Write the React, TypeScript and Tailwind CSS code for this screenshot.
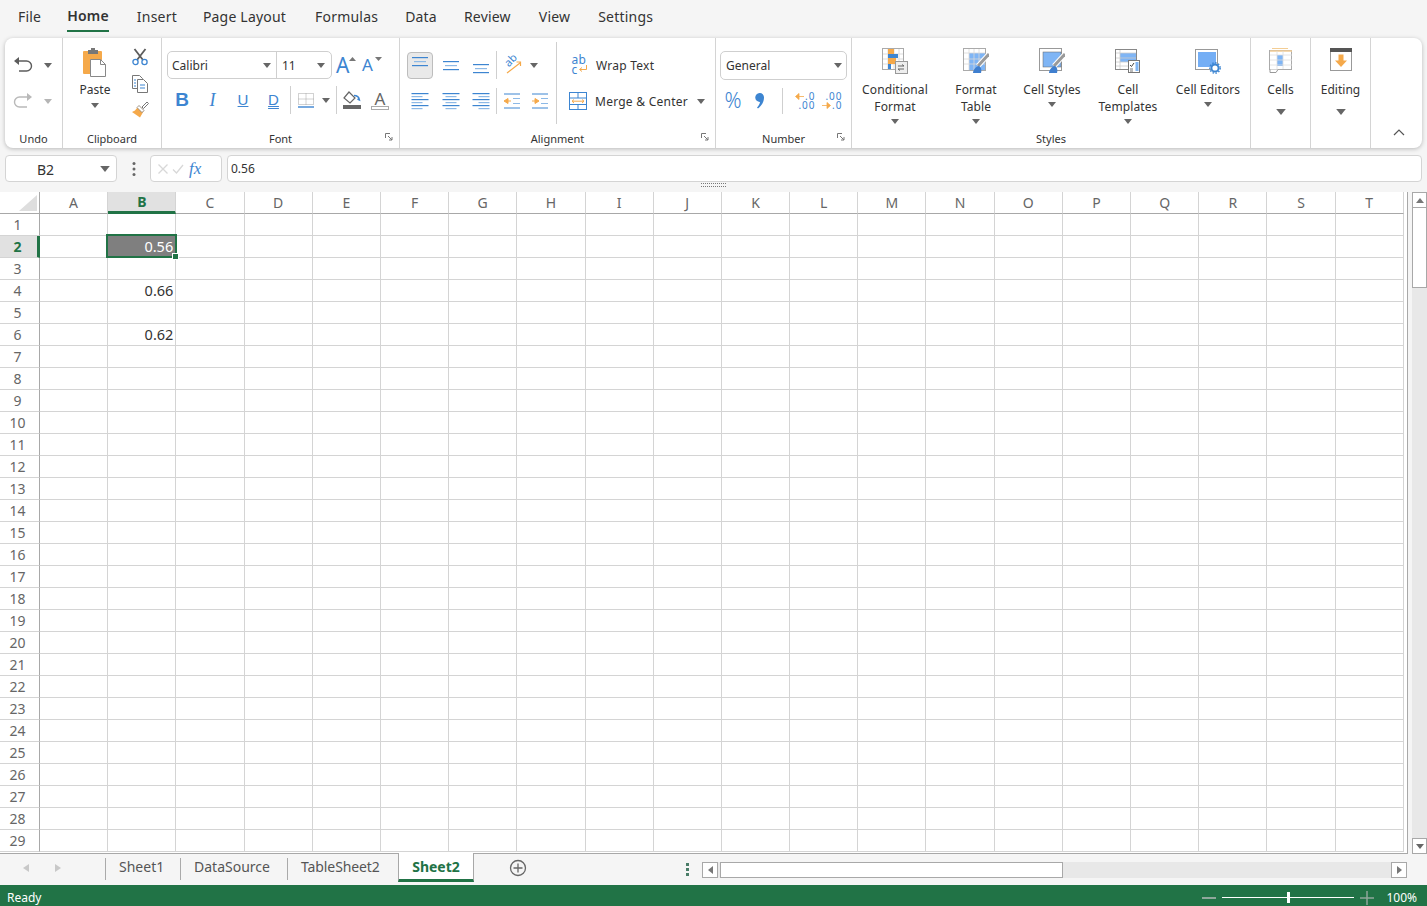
import React from 'react';

const BLUE = '#3d85d1';
const ORANGE = '#f5a94a';

const columns = ['A', 'B', 'C', 'D', 'E', 'F', 'G', 'H', 'I', 'J', 'K', 'L', 'M', 'N', 'O', 'P', 'Q', 'R', 'S', 'T'];
const rows = Array.from({ length: 29 }, (_, i) => i + 1);
const values: Record<string, string> = { B4: '0.66', B6: '0.62' };

function Caret({ light, big }: { light?: boolean; big?: boolean }) {
  return (
    <svg width={big ? 10 : 8} height={big ? 6 : 5} viewBox="0 0 8 5">
      <path d="M0 0h8L4 5z" fill={light ? '#b5b5b5' : '#666'} />
    </svg>
  );
}

function Slot({ className, children }: { className: string; children?: React.ReactNode }) {
  return <div className={`flex items-center justify-center shrink-0 ${className}`}>{children}</div>;
}

function Launcher() {
  return (
    <svg className="absolute right-[6px] bottom-[7px]" width="8" height="8" viewBox="0 0 8 8" fill="none">
      <path d="M.5 5V.5H5M3 3l4 4M7 4v3H4" stroke="#777" strokeWidth="1" />
    </svg>
  );
}

function Group({
  label,
  launcher,
  className,
  children,
}: {
  label?: string;
  launcher?: boolean;
  className: string;
  children: React.ReactNode;
}) {
  return (
    <div className={`relative flex flex-col shrink-0 border-r border-[#d4d4d4] ${className}`}>
      <div className="h-[92px]">{children}</div>
      <div className="h-[18px] text-center text-[11px] leading-[18px] text-[#333]">{label}</div>
      {launcher && <Launcher />}
    </div>
  );
}

function UndoIcon({ redo }: { redo?: boolean }) {
  const c = redo ? '#b9b9b9' : '#5c5c5c';
  return (
    <svg width="20" height="20" viewBox="0 0 20 20" fill="none" className={redo ? '-scale-x-100' : ''}>
      <path d="M5 6h8.5a4.5 4.5 0 0 1 0 10H6" stroke={c} strokeWidth="1.4" />
      <path d="M1 6l5-4v8z" fill={c} />
    </svg>
  );
}

function PasteIcon() {
  return (
    <svg width="26" height="30" viewBox="0 0 26 30">
      <rect x="1" y="4" width="19" height="23" rx="1" fill={ORANGE} />
      <rect x="6" y="3" width="10" height="4" fill="#777" />
      <rect x="9" y="1" width="4" height="3" fill="#777" />
      <path d="M8.500 12.500h10l5 5v12h-15z" fill="#fff" stroke="#888" />
      <path d="M18.500 12.500v5h5" fill="none" stroke="#888" />
    </svg>
  );
}

function CutIcon() {
  return (
    <svg width="18" height="18" viewBox="0 0 18 18" fill="none">
      <path d="M3.500 1l8.500 11M14.500 1L6 12" stroke="#5c5c5c" strokeWidth="1.800" />
      <circle cx="4.500" cy="14" r="2.600" stroke={BLUE} strokeWidth="1.300" />
      <circle cx="13.500" cy="14" r="2.600" stroke={BLUE} strokeWidth="1.300" />
    </svg>
  );
}

function CopyIcon() {
  return (
    <svg width="18" height="20" viewBox="0 0 18 20" fill="none">
      <path d="M1.500 1.500h7l3 3v10h-10z" fill="#fff" stroke="#777" />
      <path d="M6.500 5.500h6l4 4v9h-10z" fill="#fff" stroke="#777" />
      <path d="M3 6h2M3 9h2M3 12h2M9 11h5M9 14h5" stroke={BLUE} />
    </svg>
  );
}

function PainterIcon() {
  return (
    <svg width="18" height="18" viewBox="0 0 18 18" fill="none">
      <path d="M11 6l5-5 1.500 1.500-5 5z" fill="#fff" stroke="#777" />
      <path d="M8 4.500l5 5-4 7-8-5.500 3-1.500z" fill={ORANGE} />
      <path d="M8 4.500l5 5-2 2-5-5z" fill="#fff" stroke="#777" strokeWidth=".7" />
    </svg>
  );
}

function GrowA({ shrink }: { shrink?: boolean }) {
  return (
    <div className="relative flex h-[22px] w-[22px] items-center justify-start text-[#3d85d1]">
      <span className={shrink ? 'ml-[2px] text-[17px] leading-[22px]' : 'ml-[2px] text-[21px] leading-[22px]'}>A</span>
      <svg className="absolute top-[3px] right-0" width="7" height="5" viewBox="0 0 7 5">
        <path d={shrink ? 'M0 0h7L3.500 4z' : 'M0 4h7L3.500 0z'} fill="#777" />
      </svg>
    </div>
  );
}

function BorderIcon() {
  return (
    <svg width="18" height="18" viewBox="0 0 18 18" fill="none">
      <path d="M1.500 2.500h15v11h-15zM1.500 8h15M9 2.500v11" stroke="#a5a5a5" strokeDasharray="1 1" />
      <path d="M1 16h16" stroke={BLUE} strokeWidth="1.400" />
    </svg>
  );
}

function FillIcon() {
  return (
    <svg width="20" height="20" viewBox="0 0 20 20" fill="none">
      <path d="M7 2l6 6-5 5-6-5z" stroke="#666" strokeWidth="1.200" fill="#fff" />
      <path d="M12 5.500c3 0 5 1.500 5.500 4.500l-2-1" stroke={BLUE} strokeWidth="1.400" />
      <rect x="1" y="15" width="18" height="4" fill="#666" />
    </svg>
  );
}

function FontColorIcon() {
  return (
    <div className="flex w-[18px] flex-col items-center">
      <span className="text-[17px] leading-[15px] text-[#666]">A</span>
      <div className="h-[4px] w-[18px] border border-[#aaa] bg-white" />
    </div>
  );
}

function VAlignIcon({ offset }: { offset: number }) {
  return (
    <svg width="18" height="18" viewBox="0 0 18 18">
      <rect x="1" y={offset} width="16" height="1.200" fill={BLUE} />
      <rect x="3" y={offset + 4} width="12" height="1.200" fill="#8db9e6" />
      <rect x="1" y={offset + 8} width="16" height="1.200" fill={BLUE} />
    </svg>
  );
}

function HAlignIcon({ mode }: { mode: 'l' | 'c' | 'r' }) {
  const ys = [2, 5, 8, 11, 14, 17];
  return (
    <svg width="18" height="18" viewBox="0 0 18 18">
      {ys.map((y, i) => {
        const w = i % 2 === 0 ? 17 : 11;
        const x = mode === 'l' ? 0.5 : mode === 'c' ? (18 - w) / 2 : 17.5 - w;
        return <rect key={y} x={x} y={y - 1} width={w} height="1.200" fill={i % 2 === 0 ? BLUE : '#8db9e6'} />;
      })}
    </svg>
  );
}

function IndentIcon({ increase }: { increase?: boolean }) {
  return (
    <svg width="18" height="18" viewBox="0 0 18 18" fill="none">
      <path d="M1 2h16M1 16h16" stroke={BLUE} />
      <path d="M10 6.500h7M10 11.500h7" stroke="#8db9e6" />
      {increase ? (
        <path d="M1 9h5M4 6.500L8 9l-4 2.500z" stroke={ORANGE} fill={ORANGE} />
      ) : (
        <path d="M8 9H3M5 6.500L1 9l4 2.500z" stroke={ORANGE} fill={ORANGE} />
      )}
    </svg>
  );
}

function OrientationIcon() {
  return (
    <div className="relative h-[18px] w-[18px]">
      <span className="absolute top-[-3px] left-0 -rotate-45 text-[11px] leading-[14px] text-[#3d85d1]">ab</span>
      <svg className="absolute top-0 left-0" width="18" height="18" viewBox="0 0 18 18" fill="none">
        <path d="M3 17L16 7M12.500 6h4v4" stroke={ORANGE} strokeWidth="1.200" />
      </svg>
    </div>
  );
}

function WrapIcon() {
  return (
    <div className="relative h-[20px] w-[16px] text-[12px] leading-[10px] text-[#3d85d1]">
      <div>ab</div>
      <div>c</div>
      <svg className="absolute top-[10px] left-[6px]" width="10" height="9" viewBox="0 0 10 9" fill="none">
        <path d="M8.500 0v4.500H2M4 2.500l-2.500 2 2.500 2" stroke={ORANGE} />
      </svg>
    </div>
  );
}

function MergeIcon() {
  return (
    <svg width="18" height="18" viewBox="0 0 18 18" fill="none">
      <rect x=".5" y=".5" width="17" height="17" stroke={BLUE} />
      <path d="M.5 6h17M.5 12.500h17M9 .5V6M9 12.500V18" stroke={BLUE} />
      <path d="M3 9.200h12M5 7.500L3 9.200 5 11M13 7.500l2 1.700-2 1.800" stroke={ORANGE} />
    </svg>
  );
}

function DecimalIcon({ decrease }: { decrease?: boolean }) {
  return (
    <div className="flex w-[19px] flex-col items-end text-[10px] leading-[9px] tracking-[1px] text-[#3d85d1]">
      {decrease ? (
        <>
          <div>.00</div>
          <div className="flex items-center">
            <svg className="mr-[1px]" width="9" height="7" viewBox="0 0 9 7">
              <path d="M0 3.500h6M5 .5l3.500 3L5 6.500z" stroke={ORANGE} fill={ORANGE} strokeWidth=".8" />
            </svg>
            .0
          </div>
        </>
      ) : (
        <>
          <div className="flex items-center">
            <svg className="mr-[1px]" width="9" height="7" viewBox="0 0 9 7">
              <path d="M9 3.500H3M4 .5L.5 3.500 4 6.500z" stroke={ORANGE} fill={ORANGE} strokeWidth=".8" />
            </svg>
            .0
          </div>
          <div>.00</div>
        </>
      )}
    </div>
  );
}

function Brush() {
  return (
    <g>
      <path d="M15 18L26 6" stroke="#fff" strokeWidth="5" />
      <path d="M15 18L26 6" stroke="#9a9a9a" strokeWidth="3" />
      <path d="M10 25c0-3 3-7 6-7 2 1 3 4 2 7z" fill="#3f7fcf" />
    </g>
  );
}

function ConditionalIcon() {
  return (
    <svg width="26" height="26" viewBox="0 0 26 26" fill="none">
      <rect x=".5" y=".5" width="21" height="21" fill="#fff" stroke="#aaa" />
      <path d="M6 1v20M12 1v20M17 1v20M1 6h20M1 11h20M1 16h20" stroke="#ddd" />
      <rect x="6" y="1" width="6" height="5" fill={ORANGE} />
      <rect x="6" y="6" width="10" height="4" fill={BLUE} />
      <rect x="6" y="10" width="8" height="6" fill={ORANGE} />
      <rect x="6" y="16" width="3" height="5" fill={BLUE} />
      <rect x="13.500" y="13.500" width="12" height="12" fill="#eee" stroke="#999" />
      <path d="M16 18h6M20 16.500l2 1.500M22 21h-6M18 22.500L16 21" stroke="#666" />
    </svg>
  );
}

function FormatTableIcon() {
  return (
    <svg width="26" height="26" viewBox="0 0 26 26" fill="none">
      <rect x=".5" y=".5" width="22" height="22" fill="#fff" stroke="#aaa" />
      <rect x="6" y="5" width="16" height="17" fill="#7fb5f5" />
      <path d="M6 1v21M11 1v21M16 1v21M1 5h21M1 11h21M1 16h21" stroke="#d8d8d8" strokeWidth=".8" />
      <Brush />
    </svg>
  );
}

function CellStylesIcon() {
  return (
    <svg width="26" height="26" viewBox="0 0 26 26" fill="none">
      <rect x=".5" y=".5" width="22" height="22" fill="#fff" stroke="#999" />
      <rect x="4" y="4" width="18" height="15" fill="#7fb5f5" stroke="#666" strokeWidth=".5" />
      <Brush />
    </svg>
  );
}

function CellTemplatesIcon() {
  return (
    <svg width="26" height="26" viewBox="0 0 26 26" fill="none">
      <rect x=".5" y="1.500" width="21" height="20" fill="#fff" stroke="#888" />
      <rect x="5" y="5" width="16" height="9" fill="#7fb5f5" />
      <path d="M5 2v19M1 5h20M1 10h20M1 14h13M1 18h13" stroke="#ccc" strokeWidth=".8" />
      <rect x="13.500" y="12.500" width="11" height="12" fill="#fff" stroke="#777" />
      <path d="M15 17l1.500 1.500L19 15" stroke="#444" />
      <path d="M15 21h3M15 23h3" stroke="#777" />
      <rect x="20.500" y="14" width="3" height="9" fill="#7fb5f5" />
    </svg>
  );
}

function CellEditorsIcon() {
  return (
    <svg width="26" height="26" viewBox="0 0 26 26" fill="none">
      <rect x=".5" y="1.500" width="22" height="20" fill="#fff" stroke="#999" />
      <rect x="3" y="4" width="18" height="15" fill="#74aef5" />
      <circle cx="20" cy="20" r="3.600" fill="#fff" stroke={BLUE} strokeWidth="2" />
      <circle cx="20" cy="20" r="5.200" stroke={BLUE} strokeWidth="1.400" strokeDasharray="1.500 1.500" />
    </svg>
  );
}

function CellsIcon() {
  return (
    <svg width="24" height="25" viewBox="0 0 24 25" fill="none">
      <path d="M3 .5h16" stroke="#f3cd94" />
      <rect x=".5" y="2.500" width="22" height="19" fill="#fff" stroke="#aaa" />
      <path d="M1 3h22" stroke="#f3cd94" strokeWidth="1.500" />
      <rect x="8" y="7" width="6" height="11" fill="#7fb5f5" />
      <path d="M8 3v18M14 3v18M1 7h22M1 12h22M1 17h22" stroke="#ddd" strokeWidth=".8" />
      <path d="M1 21.500v3h6l2-3" fill="#fff" stroke="#999" />
    </svg>
  );
}

function EditingIcon() {
  return (
    <svg width="22" height="24" viewBox="0 0 22 24">
      <rect x=".5" y=".5" width="21" height="22" fill="#fff" stroke="#999" />
      <rect x="0" y="0" width="22" height="4" fill="#555" />
      <path d="M8.500 6.500h5v6h3.500L11 19l-6-6.500h3.500z" fill={ORANGE} />
    </svg>
  );
}

function StyleButton({ icon, label, className }: { icon: React.ReactNode; label: string[]; className: string }) {
  return (
    <div className={`flex flex-col items-center pt-[10px] shrink-0 ${className}`}>
      <div className="h-[26px]">{icon}</div>
      <div className="mt-[7px] text-center text-[12px] leading-[17px] tracking-[0.1px] text-[#333] whitespace-nowrap">
        {label.map((l) => (
          <div key={l}>{l}</div>
        ))}
      </div>
      <div className="mt-[3px] flex h-[6px] items-center">
        <Caret />
      </div>
    </div>
  );
}

function Ribbon() {
  return (
    <div className="mx-[5px] flex h-[110px] rounded-lg bg-white shadow-[0_1px_4px_rgba(0,0,0,0.25)]">
      <Group label="Undo" className="w-[58px]">
        <div className="pt-[9px] pl-[6px]">
          <div className="flex h-[36px]">
            <Slot className="w-[24px]">
              <UndoIcon />
            </Slot>
            <Slot className="w-[26px]">
              <Caret />
            </Slot>
          </div>
          <div className="flex h-[36px]">
            <Slot className="w-[24px]">
              <UndoIcon redo />
            </Slot>
            <Slot className="w-[26px]">
              <Caret light />
            </Slot>
          </div>
        </div>
      </Group>

      <Group label="Clipboard" className="w-[99px]">
        <div className="flex">
          <div className="flex w-[64px] flex-col items-center pt-[9px]">
            <PasteIcon />
            <div className="mt-[4px] text-[12px] leading-[17px] text-[#333]">Paste</div>
            <div className="mt-[5px] flex">
              <Caret />
            </div>
          </div>
          <div className="w-[26px] pt-[6px]">
            <Slot className="h-[26.5px]">
              <CutIcon />
            </Slot>
            <Slot className="h-[26.5px]">
              <CopyIcon />
            </Slot>
            <Slot className="h-[26.5px]">
              <PainterIcon />
            </Slot>
          </div>
        </div>
      </Group>

      <Group label="Font" launcher className="w-[238px]">
        <div className="flex pt-[13px] pl-[5px]">
          <div className="flex h-[28px] w-[165px] items-center rounded-[5px] border border-[#cfcfcf] text-[12px] text-[#333]">
            <div className="flex h-full w-[109px] items-center justify-between border-r border-[#cfcfcf] pt-[1px] pr-[5px] pl-[4px]">
              Calibri
              <Caret />
            </div>
            <div className="flex flex-1 items-center justify-between pt-[1px] pr-[6px] pl-[5px]">
              11
              <Caret />
            </div>
          </div>
          <Slot className="h-[28px] w-[26px]">
            <GrowA />
          </Slot>
          <Slot className="h-[28px] w-[26px]">
            <GrowA shrink />
          </Slot>
        </div>
        <div className="mt-[3px] flex h-[36px] items-center pl-[5px] font-['Liberation_Sans',sans-serif] text-[#3d85d1]">
          <Slot className="w-[30px] text-[19px] font-bold">B</Slot>
          <Slot className="w-[31px] font-['Liberation_Serif',serif] text-[18px] italic">I</Slot>
          <Slot className="w-[30px] text-[15px] underline">U</Slot>
          <Slot className="w-[31px] text-[15px] underline decoration-double">D</Slot>
          <div className="ml-[1px] h-[28px] w-px bg-[#cfcfcf]" />
          <Slot className="w-[30px]">
            <BorderIcon />
          </Slot>
          <Slot className="w-[10px]">
            <Caret />
          </Slot>
          <div className="ml-[5px] h-[28px] w-px bg-[#cfcfcf]" />
          <Slot className="w-[30px]">
            <FillIcon />
          </Slot>
          <Slot className="w-[26px] font-['Noto_Sans',sans-serif]">
            <FontColorIcon />
          </Slot>
        </div>
      </Group>

      <Group label="Alignment" launcher className="w-[316px]">
        <div className="flex">
          <div className="w-[156px] pt-[9px] pl-[4px]">
            <div className="flex h-[36px] items-center">
              <Slot className="w-[31px]">
                <div className="flex h-[27px] w-[26px] items-center justify-center rounded-[4px] border border-[#bdbdbd] bg-[#e9e9e9]">
                  <VAlignIcon offset={1} />
                </div>
              </Slot>
              <Slot className="w-[31px]">
                <VAlignIcon offset={5} />
              </Slot>
              <Slot className="w-[30px]">
                <VAlignIcon offset={8} />
              </Slot>
              <div className="h-[28px] w-px bg-[#cfcfcf]" />
              <Slot className="w-[32px]">
                <OrientationIcon />
              </Slot>
              <Slot className="w-[10px]">
                <Caret />
              </Slot>
            </div>
            <div className="flex h-[36px] items-center">
              <Slot className="w-[31px]">
                <HAlignIcon mode="l" />
              </Slot>
              <Slot className="w-[31px]">
                <HAlignIcon mode="c" />
              </Slot>
              <Slot className="w-[30px]">
                <HAlignIcon mode="r" />
              </Slot>
              <div className="h-[26px] w-px bg-[#cfcfcf]" />
              <Slot className="w-[30px]">
                <IndentIcon />
              </Slot>
              <Slot className="w-[25px]">
                <IndentIcon increase />
              </Slot>
            </div>
          </div>
          <div className="mt-[4px] h-[82px] w-px bg-[#cfcfcf]" />
          <div className="w-[158px] pt-[9px] text-[12px] tracking-[0.25px] text-[#333]">
            <div className="flex h-[36px] items-center pl-[12px]">
              <Slot className="w-[21px]">
                <WrapIcon />
              </Slot>
              <span className="ml-[6px] pt-[1px]">Wrap Text</span>
            </div>
            <div className="flex h-[36px] items-center pl-[10px]">
              <Slot className="w-[21px]">
                <MergeIcon />
              </Slot>
              <span className="ml-[7px] pt-[1px]">Merge &amp; Center</span>
              <Slot className="mr-[9px] ml-auto w-[10px]">
                <Caret />
              </Slot>
            </div>
          </div>
        </div>
      </Group>

      <Group label="Number" launcher className="w-[136px]">
        <div className="pt-[13px] pl-[4px]">
          <div className="flex h-[29px] w-[127px] items-center justify-between rounded-[5px] border border-[#cfcfcf] pr-[4px] pl-[5px] text-[12px] text-[#333]">
            <span className="pt-[1px]">General</span>
            <Caret />
          </div>
          <div className="mt-[3px] flex h-[36px] items-center text-[#3d85d1]">
            <Slot className="w-[26px] text-[21px] font-light">%</Slot>
            <Slot className="w-[28px]">
              <svg width="10" height="16" viewBox="0 0 10 16">
                <path d="M4.500 0a4.300 4.300 0 0 1 4.500 4.500c0 4.500-2.500 8.500-6 11l-1-1c1.700-1.700 2.700-3.500 3-5.500A4.400 4.400 0 0 1 4.500 0z" fill={BLUE} />
              </svg>
            </Slot>
            <div className="ml-[8px] h-[26px] w-px bg-[#cfcfcf]" />
            <Slot className="ml-[9px] w-[28px]">
              <DecimalIcon />
            </Slot>
            <Slot className="w-[26px]">
              <DecimalIcon decrease />
            </Slot>
          </div>
        </div>
      </Group>

      <Group label="Styles" className="w-[399px]">
        <div className="flex">
          <StyleButton className="w-[86px]" icon={<ConditionalIcon />} label={['Conditional', 'Format']} />
          <StyleButton className="w-[76px]" icon={<FormatTableIcon />} label={['Format', 'Table']} />
          <StyleButton className="w-[76px]" icon={<CellStylesIcon />} label={['Cell Styles']} />
          <StyleButton className="w-[76px]" icon={<CellTemplatesIcon />} label={['Cell', 'Templates']} />
          <StyleButton className="w-[84px]" icon={<CellEditorsIcon />} label={['Cell Editors']} />
        </div>
      </Group>

      <Group className="w-[60px]">
        <div className="flex flex-col items-center pt-[10px]">
          <div className="h-[25px]">
            <CellsIcon />
          </div>
          <div className="mt-[8px] text-[12px] leading-[17px] text-[#333]">Cells</div>
          <div className="mt-[11px] flex">
            <Caret big />
          </div>
        </div>
      </Group>

      <Group className="w-[60px]">
        <div className="flex flex-col items-center pt-[10px]">
          <div className="h-[25px]">
            <EditingIcon />
          </div>
          <div className="mt-[8px] text-[12px] leading-[17px] text-[#333]">Editing</div>
          <div className="mt-[11px] flex">
            <Caret big />
          </div>
        </div>
      </Group>

      <div className="flex flex-1 items-end justify-center pb-[12px] pl-[5px]">
        <svg width="12" height="8" viewBox="0 0 12 8" fill="none">
          <path d="M1 7l5-5 5 5" stroke="#555" strokeWidth="1.200" />
        </svg>
      </div>
    </div>
  );
}

function FormulaBar() {
  return (
    <div className="mx-[5px] mt-[7px] flex h-[27px] text-[12px] text-[#333]">
      <div className="flex w-[112px] items-center rounded-[4px] border border-[#d4d4d4] bg-white pr-[6px]">
        <span className="flex-1 pt-[1px] pr-[15px] text-center text-[14px]">B2</span>
        <Caret big />
      </div>
      <Slot className="w-[33px]">
        <svg width="4" height="16" viewBox="0 0 4 16" fill="#666">
          <circle cx="2" cy="2.500" r="1.500" />
          <circle cx="2" cy="8" r="1.500" />
          <circle cx="2" cy="13.500" r="1.500" />
        </svg>
      </Slot>
      <div className="flex w-[72px] items-center gap-[3px] rounded-[4px] border border-[#d4d4d4] bg-white pl-[6px]">
        <svg width="12" height="12" viewBox="0 0 12 12" fill="none" stroke="#d8d8d8" strokeWidth="1.300">
          <path d="M1.500 1.500l9 9M10.500 1.500l-9 9" />
        </svg>
        <svg width="12" height="12" viewBox="0 0 12 12" fill="none" stroke="#d8d8d8" strokeWidth="1.300">
          <path d="M1 6.500l3.500 3.500L11 2" />
        </svg>
        <span className="ml-[2px] font-['Liberation_Serif',serif] text-[17px] text-[#3d85d1] italic">fx</span>
      </div>
      <div className="ml-[5px] flex flex-1 items-center rounded-[4px] border border-[#d4d4d4] bg-white pt-[1px] pl-[3px]">0.56</div>
    </div>
  );
}

function Sheet() {
  return (
    <div className="flex h-[662px]">
      <div className="w-[1408px] overflow-hidden border-r border-b border-[#a8a8a8] bg-white">
        <div className="grid grid-cols-[40px_repeat(20,68.2px)] auto-rows-[22px] text-[14px] text-[#666]">
          <div className="flex items-end justify-end border-r border-b border-[#a8a8a8] pr-[2px] pb-[2px]">
            <svg width="18" height="16" viewBox="0 0 18 16">
              <path d="M18 0v16H0z" fill="#dedede" />
            </svg>
          </div>
          {columns.map((c) =>
            c === 'B' ? (
              <div
                key={c}
                className="flex items-center justify-center border-r border-b-[3px] border-r-[#d4d4d4] border-b-[#217346] bg-[#e1e1e1] font-bold text-[#217346]"
              >
                {c}
              </div>
            ) : (
              <div key={c} className="flex items-center justify-center border-r border-b border-r-[#d4d4d4] border-b-[#a8a8a8]">
                {c}
              </div>
            ),
          )}
          {rows.map((r) => (
            <React.Fragment key={r}>
              {r === 2 ? (
                <div className="flex items-center justify-center border-r-[3px] border-b border-r-[#217346] border-b-[#d4d4d4] bg-[#e1e1e1] pr-[2px] font-bold text-[#217346]">
                  {r}
                </div>
              ) : (
                <div className="flex items-center justify-center border-r border-b border-r-[#a8a8a8] border-b-[#d4d4d4] pr-[4px]">
                  {r}
                </div>
              )}
              {columns.map((c) => {
                const id = `${c}${r}`;
                return (
                  <div
                    key={id}
                    className="relative flex items-center justify-end border-r border-b border-[#d4d4d4] pr-[2px] text-[14.5px] text-[#333]"
                  >
                    {values[id]}
                    {id === 'B2' && (
                      <div className="absolute top-[-2px] left-[-2px] z-10 flex h-[24px] w-[71px] items-center justify-end border-2 border-[#217346] bg-[#7f7f7f] pt-[1px] pr-[2px] text-white">
                        0.56
                        <div className="absolute right-[-4px] bottom-[-4px] h-[7px] w-[7px] border border-white bg-[#217346]" />
                      </div>
                    )}
                  </div>
                );
              })}
            </React.Fragment>
          ))}
        </div>
      </div>
      <div className="ml-[4px] flex w-[15px] flex-col bg-[#e8e8e8]">
        <Slot className="h-[16px] border border-[#a8a8a8] bg-white">
          <svg width="8" height="5" viewBox="0 0 8 5">
            <path d="M0 5h8L4 0z" fill="#777" />
          </svg>
        </Slot>
        <div className="h-[80px] border-x border-b border-[#a8a8a8] bg-white" />
        <div className="flex-1" />
        <Slot className="h-[16px] border border-[#a8a8a8] bg-white">
          <Caret />
        </Slot>
      </div>
    </div>
  );
}

function Tabs() {
  return (
    <div className="flex h-[31px] items-start text-[14px] text-[#555]">
      <div className="flex h-[28px] w-[105px] items-center">
        <svg className="ml-[23px]" width="6" height="8" viewBox="0 0 6 8">
          <path d="M6 0v8L0 4z" fill="#c8c8c8" />
        </svg>
        <svg className="ml-[26px]" width="6" height="8" viewBox="0 0 6 8">
          <path d="M0 0v8l6-4z" fill="#c8c8c8" />
        </svg>
      </div>
      <div className="mt-[4px] h-[22px] w-px bg-[#aaa]" />
      <div className="flex h-[24px] w-[74px] items-center pl-[13px]">Sheet1</div>
      <div className="mt-[4px] h-[22px] w-px bg-[#aaa]" />
      <div className="flex h-[24px] w-[106px] items-center pl-[13px]">DataSource</div>
      <div className="mt-[4px] h-[22px] w-px bg-[#aaa]" />
      <div className="flex h-[24px] w-[110px] items-center pl-[13px] tracking-[-0.1px]">TableSheet2</div>
      <div className="-mt-px flex h-[29px] w-[76px] items-center justify-center border-x border-b-[3px] border-x-[#a8a8a8] border-b-[#217346] bg-white font-bold text-[#217346]">
        Sheet2
      </div>
      <Slot className="ml-[34px] h-[28px] w-[20px]">
        <svg width="18" height="18" viewBox="0 0 18 18" fill="none" stroke="#666" strokeWidth="1.300">
          <circle cx="9" cy="9" r="7.500" />
          <path d="M9 4.500v9M4.500 9h9" />
        </svg>
      </Slot>
      <Slot className="ml-[157px] h-[30px] w-[5px]">
        <svg width="3" height="13" viewBox="0 0 3 13" fill="#4a7d68">
          <rect width="3" height="3" />
          <rect y="5" width="3" height="3" />
          <rect y="10" width="3" height="3" />
        </svg>
      </Slot>
      <div className="mt-[8px] ml-[12px] flex h-[16px] w-[705px] bg-[#e8e8e8]">
        <Slot className="w-[16px] border border-[#a8a8a8] bg-white">
          <svg width="5" height="8" viewBox="0 0 5 8">
            <path d="M5 0v8L0 4z" fill="#777" />
          </svg>
        </Slot>
        <div className="ml-[2px] w-[343px] border border-[#a8a8a8] bg-white" />
        <div className="flex-1" />
        <Slot className="w-[16px] border border-[#a8a8a8] bg-white">
          <svg width="5" height="8" viewBox="0 0 5 8">
            <path d="M0 0v8l5-4z" fill="#777" />
          </svg>
        </Slot>
      </div>
    </div>
  );
}

function StatusBar() {
  return (
    <div className="flex h-[21px] items-center bg-[#217346] pt-[4px] pl-[7px] text-[12px] text-white">
      <span>Ready</span>
      <div className="ml-auto flex items-center pr-[10px]">
        <div className="h-[2px] w-[14px] bg-[#8fa79b]" />
        <div className="relative ml-[6px] h-px w-[132px] bg-white">
          <div className="absolute top-[-5px] left-[65px] h-[11px] w-[3px] bg-white" />
        </div>
        <svg className="ml-[6px]" width="14" height="14" viewBox="0 0 14 14" stroke="#8fa79b" strokeWidth="1.500">
          <path d="M0 7h14M7 0v14" />
        </svg>
        <span className="ml-[12px]">100%</span>
      </div>
    </div>
  );
}

export default function App() {
  const menu = [
    ['File', 'ml-[18px]'],
    ['Home', 'ml-[26px] font-semibold'],
    ['Insert', 'ml-[28px]'],
    ['Page Layout', 'ml-[26px]'],
    ['Formulas', 'ml-[29px]'],
    ['Data', 'ml-[27px]'],
    ['Review', 'ml-[27px]'],
    ['View', 'ml-[28px]'],
    ['Settings', 'ml-[28px]'],
  ];

  return (
    <div className="flex h-[906px] w-[1427px] flex-col overflow-hidden bg-[#f5f5f5] font-['Noto_Sans',sans-serif]">
      <div className="flex h-[38px] items-start text-[14px] tracking-[0.2px] text-[#333]">
        {menu.map(([name, cls]) => (
          <div
            key={name}
            className={`flex h-[32px] items-center whitespace-nowrap ${cls} ${name === 'Home' ? 'border-b-2 border-[#217346]' : ''}`}
          >
            {name}
          </div>
        ))}
      </div>
      <Ribbon />
      <FormulaBar />
      <div className="flex h-[10px] justify-center pt-[1px]">
        <div className="h-[4px] w-[25px] border-y border-dotted border-[#777]" />
      </div>
      <Sheet />
      <Tabs />
      <StatusBar />
    </div>
  );
}
